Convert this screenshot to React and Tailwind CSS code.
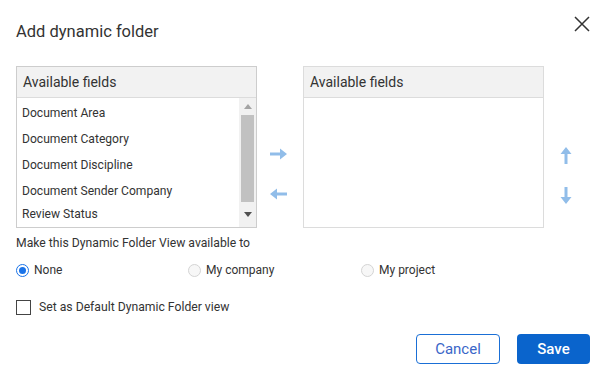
import React from "react";

const items = [
  "Document Area",
  "Document Category",
  "Document Discipline",
  "Document Sender Company",
  "Review Status",
];

function ArrowRight() {
  return (
    <svg width="17" height="12" viewBox="0 0 17 12">
      <path d="M0 4.5h10V0.5L17 6l-7 5.5V7.5H0z" fill="#91bde9" />
    </svg>
  );
}
function ArrowLeft() {
  return (
    <svg width="17" height="12" viewBox="0 0 17 12">
      <path d="M17 4.5H7V0.5L0 6l7 5.5V7.5h10z" fill="#91bde9" />
    </svg>
  );
}
function ArrowUp() {
  return (
    <svg width="12" height="17" viewBox="0 0 12 17">
      <path d="M4.5 17V7H0.5L6 0l5.5 7H7.5v10z" fill="#91bde9" />
    </svg>
  );
}
function ArrowDown() {
  return (
    <svg width="12" height="17" viewBox="0 0 12 17">
      <path d="M4.5 0v10H0.5L6 17l5.5-7H7.5V0z" fill="#91bde9" />
    </svg>
  );
}

function Radio({ checked, label }) {
  return (
    <div className="flex items-center gap-[5px]">
      {checked ? (
        <span className="w-[13px] h-[13px] rounded-full border-[1.5px] border-[#1a73e8] flex items-center justify-center bg-white">
          <span className="w-[7px] h-[7px] rounded-full bg-[#1a73e8]" />
        </span>
      ) : (
        <span className="w-[13px] h-[13px] rounded-full border border-[#d4d4d4] bg-[#f7f7f7]" />
      )}
      <span className="text-[12px] leading-[16px] text-[#333]">{label}</span>
    </div>
  );
}

export default function App() {
  return (
    <div className="w-[606px] h-[368px] bg-white font-['Roboto',sans-serif] text-[#333] flex flex-col">
      <div className="h-[66px] shrink-0 flex items-start justify-between pl-4 pr-[16px]">
        <span className="mt-[22px] text-[16.5px] leading-[20px] text-[#333]">Add dynamic folder</span>
        <svg width="16" height="16" viewBox="0 0 16 16" className="mt-[16px]">
          <path d="M1 1L15 15M15 1L1 15" stroke="#333" strokeWidth="1.5" />
        </svg>
      </div>

      <div className="flex pl-4 items-start shrink-0">
        <div className="w-[241px] h-[162px] border border-[#cdcdcd] flex flex-col">
          <div className="h-[31px] bg-[#f2f2f2] border-b border-[#dcdcdc] flex items-center px-[6px] pt-[1px] text-[14px] text-[#333]">
            Available fields
          </div>
          <div className="flex-1 flex overflow-hidden">
            <div className="flex-1 flex flex-col pl-[5px] pt-[2px]">
              {items.map((t, i) => (
                <div
                  key={t}
                  className={`${i === 4 ? "h-[20px]" : "h-[26px]"} flex items-center text-[12.1px] text-[#333]`}
                >
                  {t}
                </div>
              ))}
            </div>
            <div className="w-[17px] bg-[#f1f1f1] flex flex-col items-center">
              <div className="h-[17px] flex items-center justify-center">
                <svg width="8" height="5" viewBox="0 0 8 5">
                  <path d="M0 5L4 0L8 5z" fill="#a3a3a3" />
                </svg>
              </div>
              <div className="w-[13px] h-[87px] bg-[#c1c1c1]" />
              <div className="flex-1 flex items-center justify-center">
                <svg width="8" height="5" viewBox="0 0 8 5">
                  <path d="M0 0L8 0L4 5z" fill="#505050" />
                </svg>
              </div>
            </div>
          </div>
        </div>

        <div className="w-[46px] flex flex-col items-center pt-[82px] gap-[28px] pr-[3px]">
          <ArrowRight />
          <ArrowLeft />
        </div>

        <div className="w-[241px] h-[162px] border border-[#dcdcdc] flex flex-col">
          <div className="h-[31px] bg-[#f2f2f2] border-b border-[#dcdcdc] flex items-center px-[6px] pt-[1px] text-[14px] text-[#333]">
            Available fields
          </div>
          <div className="flex-1" />
        </div>

        <div className="flex flex-col items-center pl-[16px] pt-[81px] gap-[23px]">
          <ArrowUp />
          <ArrowDown />
        </div>
      </div>

      <div className="pl-4 mt-[7px] text-[12.2px] text-[#333] leading-[16px]">
        Make this Dynamic Folder View available to
      </div>

      <div className="pl-4 mt-[11px] flex">
        <div className="w-[172px]">
          <Radio checked label="None" />
        </div>
        <div className="w-[173px]">
          <Radio label="My company" />
        </div>
        <div>
          <Radio label="My project" />
        </div>
      </div>

      <div className="pl-4 mt-[21px] flex items-center gap-[8px]">
        <span className="w-[15px] h-[15px] border border-[#444] bg-white" />
        <span className="text-[12.2px] leading-[16px] text-[#333]">Set as Default Dynamic Folder view</span>
      </div>

      <div className="flex justify-end gap-[17px] pr-[16px] mt-[19px]">
        <button className="w-[84px] h-[30px] rounded-[4px] border border-[#1a6fd6] text-[#3a66c8] text-[15px] bg-white">
          Cancel
        </button>
        <button className="w-[73px] h-[30px] rounded-[4px] bg-[#0a64cc] text-white text-[15px] font-medium">
          Save
        </button>
      </div>
    </div>
  );
}
